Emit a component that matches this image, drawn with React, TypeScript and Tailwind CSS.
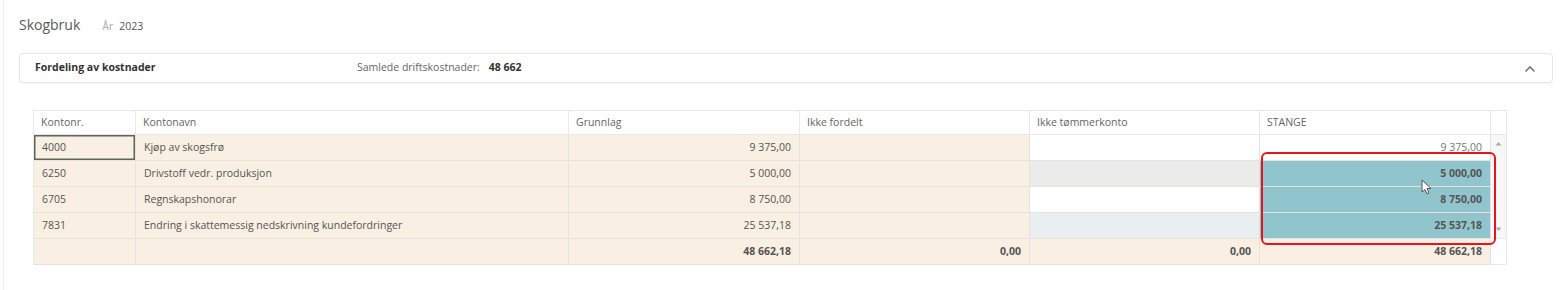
import React from "react";

const beige = "bg-[#f9efe2]";

type Row = {
  nr: string;
  navn: string;
  grunnlag: string;
  ikkeBg: string;
  stange: string;
  sel: boolean;
};

const rows: Row[] = [
  { nr: "4000", navn: "Kjøp av skogsfrø", grunnlag: "9 375,00", ikkeBg: "bg-white", stange: "9 375,00", sel: false },
  { nr: "6250", navn: "Drivstoff vedr. produksjon", grunnlag: "5 000,00", ikkeBg: "bg-[#ebebeb]", stange: "5 000,00", sel: true },
  { nr: "6705", navn: "Regnskapshonorar", grunnlag: "8 750,00", ikkeBg: "bg-white", stange: "8 750,00", sel: true },
  { nr: "7831", navn: "Endring i skattemessig nedskrivning kundefordringer", grunnlag: "25 537,18", ikkeBg: "bg-[#e9eff1]", stange: "25 537,18", sel: true },
];

const cell = "h-[26px] flex items-center px-[8px] border-r border-b border-[#e6e2dc] text-[10.5px] text-[#555]";

export default function App() {
  return (
    <div
      className="w-[1561px] h-[290px] bg-white overflow-hidden"
      style={{ fontFamily: '"Open Sans", "Noto Sans", sans-serif' }}
    >
      <div className="h-full ml-[3px] mr-[8px] border-l border-[#ececec] pl-[15px] pt-[14px]">
        <div className="flex items-baseline h-[22px]">
          <span className="text-[14px] text-[#5a5a5a]">Skogbruk</span>
          <span className="ml-[22px] text-[10.5px] text-[#aaa]">År</span>
          <span className="ml-[6px] text-[10.5px] text-[#555]">2023</span>
        </div>
        <div className="mt-[17px] h-[30px] mr-[0px] border border-[#e4e4e4] rounded-[4px] flex items-center pl-[15px] pr-[16px] shadow-[0_1px_1px_rgba(0,0,0,0.03)]">
          <span className="w-[322px] text-[10.5px] font-bold text-[#333]">Fordeling av kostnader</span>
          <span className="text-[10.5px] text-[#666]">Samlede driftskostnader:</span>
          <span className="ml-[9px] text-[10.5px] font-bold text-[#333]">48 662</span>
          <div className="flex-1" />
          <svg width="12" height="8" viewBox="0 0 12 8" className="mt-[1px]">
            <path d="M1.5 6.5 L6 2 L10.5 6.5" fill="none" stroke="#777" strokeWidth="1.6" />
          </svg>
        </div>
        <div className="relative mt-[27px] ml-[14px] w-[1474px] border-t border-l border-[#e8e8e8]">
          <div className="grid grid-cols-[102px_433px_231px_230px_230px_231px_16px]">
            {["Kontonr.", "Kontonavn", "Grunnlag", "Ikke fordelt", "Ikke tømmerkonto", "STANGE"].map((h) => (
              <div key={h} className="h-[24px] flex items-center px-[7px] bg-white border-r border-b border-[#e8e8e8] text-[10.5px] text-[#666]">
                {h}
              </div>
            ))}
            <div className="h-[24px] bg-white border-r border-b border-[#e8e8e8]" />
            {rows.map((r, i) => (
              <React.Fragment key={r.nr}>
                <div className={`${cell} ${beige} ${i === 0 ? "shadow-[inset_0_0_0_1.5px_#5b675b]" : ""}`}>{r.nr}</div>
                <div className={`${cell} ${beige}`}>{r.navn}</div>
                <div className={`${cell} ${beige} justify-end`}>{r.grunnlag}</div>
                <div className={`${cell} ${beige}`} />
                <div className={`${cell} ${r.ikkeBg}`} />
                <div
                  className={`${cell} justify-end ${
                    r.sel ? "bg-[#91c5cd] border-[#b5d6db] font-bold text-[#333]" : "bg-white text-[#777]"
                  }`}
                >
                  {r.stange}
                </div>
                {i === 0 ? (
                  <div className="row-span-4 bg-[#f7f7f7] border-r border-b border-[#e8e8e8] flex flex-col items-center justify-between py-[6px]">
                    <svg width="7" height="5" viewBox="0 0 7 5">
                      <path d="M0.5 4.5 L3.5 1 L6.5 4.5 Z" fill="#aaa" />
                    </svg>
                    <svg width="7" height="5" viewBox="0 0 7 5">
                      <path d="M0.5 0.5 L3.5 4 L6.5 0.5 Z" fill="#aaa" />
                    </svg>
                  </div>
                ) : null}
              </React.Fragment>
            ))}
            <div className={`${cell} ${beige}`} />
            <div className={`${cell} ${beige}`} />
            <div className={`${cell} ${beige} justify-end font-bold text-[#333]`}>48 662,18</div>
            <div className={`${cell} ${beige} justify-end font-bold text-[#333]`}>0,00</div>
            <div className={`${cell} ${beige} justify-end font-bold text-[#333]`}>0,00</div>
            <div className={`${cell} ${beige} justify-end font-bold text-[#333]`}>48 662,18</div>
            <div className="h-[26px] bg-white border-r border-b border-[#e8e8e8]" />
          </div>
          <div className="absolute left-[1227px] top-[41px] w-[235px] h-[93px] border-2 border-[#e8141b] rounded-[6px] pointer-events-none" />
          <svg className="absolute left-[1387px] top-[68px]" width="11" height="17" viewBox="0 0 11 17">
            <path d="M1 1 L1 13 L4 10.5 L6 15 L8 14 L6 9.5 L10 9.5 Z" fill="#fff" stroke="#555" strokeWidth="1" strokeLinejoin="round" />
          </svg>
        </div>
      </div>
    </div>
  );
}
